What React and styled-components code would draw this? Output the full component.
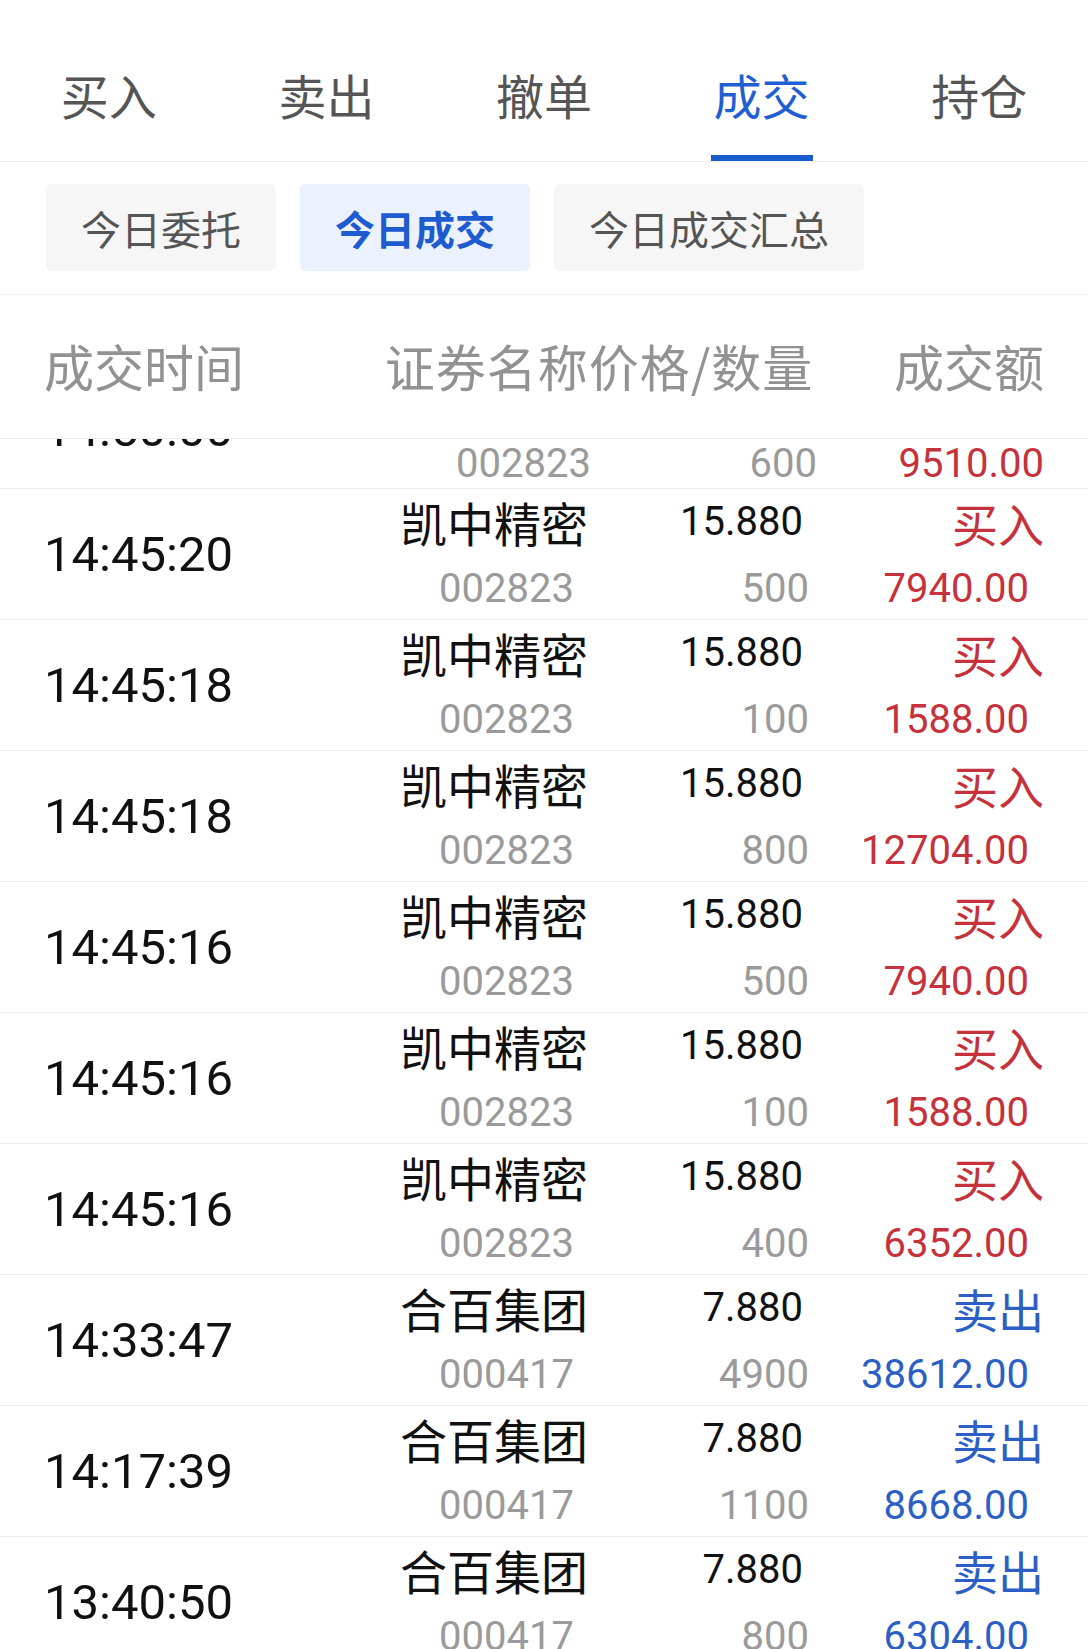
import React from 'react';
import styled, { createGlobalStyle, css } from 'styled-components';

const GlobalStyle = createGlobalStyle`
  html, body {
    margin: 0;
    padding: 0;
    background: #ffffff;
  }
  body {
    font-family: Roboto, 'Noto Sans CJK SC', sans-serif;
    color: #111111;
  }
`;

const Page = styled.div`
  width: 1088px;
  height: 1649px;
  overflow: hidden;
  background: #ffffff;
  display: flex;
  flex-direction: column;
`;

const TabBar = styled.div`
  display: flex;
  height: 161px;
  border-bottom: 1px solid #eeeeee;
  flex-shrink: 0;
`;

const Tab = styled.div`
  flex: 1;
  display: flex;
  flex-direction: column;
  align-items: center;
  padding-top: 66px;
  box-sizing: border-box;
  font-family: 'Noto Sans CJK SC', sans-serif;
  font-size: 48px;
  line-height: 56px;
  color: ${props => (props.active ? '#1f5fd2' : '#555555')};
`;

const TabIndicator = styled.div`
  margin-top: auto;
  width: 102px;
  height: 6px;
  background: #1a5cd0;
`;

const FilterBar = styled.div`
  display: flex;
  gap: 24px;
  padding: 22px 46px 23px;
  border-bottom: 1px solid #f0f0f0;
  flex-shrink: 0;
`;

const FilterButton = styled.div`
  height: 87px;
  padding: 0 35px;
  display: flex;
  align-items: center;
  border-radius: 5px;
  font-family: 'Noto Sans CJK SC', sans-serif;
  font-size: 40px;
  background: #f6f6f6;
  color: #555555;
  ${props => props.active && css`
    background: #ebf2fd;
    color: #1e5bd0;
    font-weight: bold;
  `}
`;

const Grid = css`
  display: grid;
  grid-template-columns: 380px 212px 226px 226px;
  padding-right: 44px;
`;

const HeaderRow = styled.div`
  ${Grid}
  height: 143px;
  align-items: center;
  border-bottom: 1px solid #eeeeee;
  font-family: 'Noto Sans CJK SC', sans-serif;
  font-size: 50px;
  color: #929292;
  flex-shrink: 0;
`;

const HeaderCell = styled.div`
  padding-left: ${props => props.left || 0}px;
  text-align: ${props => props.align || 'left'};
  grid-column: ${props => props.span || 'auto'};
  letter-spacing: ${props => props.spacing || 0}px;
  margin-top: -4px;
  white-space: nowrap;
`;

const List = styled.div`
  flex: 1;
  overflow: hidden;
`;

const ListInner = styled.div`
  margin-top: -81px;
`;

const Row = styled.div`
  ${Grid}
  height: 130px;
  border-bottom: 1px solid #ececec;
`;

const TimeCell = styled.div`
  display: flex;
  align-items: center;
  padding-left: 44px;
  padding-top: ${props => (props.shifted ? 12 : 0)}px;
  font-size: 49px;
  color: #111111;
`;

const Stack = styled.div`
  display: flex;
  flex-direction: column;
  align-items: flex-end;
`;

const TopLine = styled.div`
  height: 66px;
  line-height: 66px;
  padding-right: ${props => props.pad}px;
  white-space: nowrap;
`;

const BottomLine = styled.div`
  height: 64px;
  line-height: ${props => (props.shifted ? 80 : 68)}px;
  padding-right: ${props => props.pad}px;
  white-space: nowrap;
  font-size: 40px;
  color: ${props => props.color || '#9a9a9a'};
`;

const Name = styled(TopLine)`
  font-family: 'Noto Sans CJK SC', sans-serif;
  font-size: 47px;
  color: #111111;
`;

const Price = styled(TopLine)`
  font-size: 40px;
  color: #111111;
`;

const Side = styled(TopLine)`
  font-family: 'Noto Sans CJK SC', sans-serif;
  font-size: 46px;
  color: ${props => props.color};
`;

const RED = '#c5323b';
const BLUE = '#2c5fc6';

const trades = [
  { time: '14:50:00', name: '凯中精密', price: '15.850', code: '002823', qty: '600', amount: '9510.00', side: 'buy', shifted: true },
  { time: '14:45:20', name: '凯中精密', price: '15.880', code: '002823', qty: '500', amount: '7940.00', side: 'buy' },
  { time: '14:45:18', name: '凯中精密', price: '15.880', code: '002823', qty: '100', amount: '1588.00', side: 'buy' },
  { time: '14:45:18', name: '凯中精密', price: '15.880', code: '002823', qty: '800', amount: '12704.00', side: 'buy' },
  { time: '14:45:16', name: '凯中精密', price: '15.880', code: '002823', qty: '500', amount: '7940.00', side: 'buy' },
  { time: '14:45:16', name: '凯中精密', price: '15.880', code: '002823', qty: '100', amount: '1588.00', side: 'buy' },
  { time: '14:45:16', name: '凯中精密', price: '15.880', code: '002823', qty: '400', amount: '6352.00', side: 'buy' },
  { time: '14:33:47', name: '合百集团', price: '7.880', code: '000417', qty: '4900', amount: '38612.00', side: 'sell' },
  { time: '14:17:39', name: '合百集团', price: '7.880', code: '000417', qty: '1100', amount: '8668.00', side: 'sell' },
  { time: '13:40:50', name: '合百集团', price: '7.880', code: '000417', qty: '800', amount: '6304.00', side: 'sell' },
];

const tabs = ['买入', '卖出', '撤单', '成交', '持仓'];
const filters = ['今日委托', '今日成交', '今日成交汇总'];

const TradeRow = ({ t }) => {
  const color = t.side === 'buy' ? RED : BLUE;
  return (
    <Row>
      <TimeCell shifted={t.shifted}>{t.time}</TimeCell>
      <Stack>
        <Name pad={4}>{t.name}</Name>
        <BottomLine shifted={t.shifted} pad={t.shifted ? 1 : 18}>{t.code}</BottomLine>
      </Stack>
      <Stack>
        <Price pad={15}>{t.price}</Price>
        <BottomLine shifted={t.shifted} pad={t.shifted ? 1 : 9}>{t.qty}</BottomLine>
      </Stack>
      <Stack>
        <Side pad={0} color={color}>{t.side === 'buy' ? '买入' : '卖出'}</Side>
        <BottomLine shifted={t.shifted} pad={t.shifted ? 0 : 15} color={color}>{t.amount}</BottomLine>
      </Stack>
    </Row>
  );
};

const App = () => {
  return (
    <Page>
      <GlobalStyle />
      <TabBar>
        {tabs.map(label => (
          <Tab key={label} active={label === '成交'}>
            <span>{label}</span>
            {label === '成交' && <TabIndicator />}
          </Tab>
        ))}
      </TabBar>
      <FilterBar>
        {filters.map(label => (
          <FilterButton key={label} active={label === '今日成交'}>{label}</FilterButton>
        ))}
      </FilterBar>
      <HeaderRow>
        <HeaderCell left={44}>成交时间</HeaderCell>
        <HeaderCell span="2 / 4" align="center" spacing={1}>证券名称价格/数量</HeaderCell>
        <HeaderCell align="right">成交额</HeaderCell>
      </HeaderRow>
      <List>
        <ListInner>
          {trades.map((t, i) => (
            <TradeRow key={i} t={t} />
          ))}
        </ListInner>
      </List>
    </Page>
  );
};

export default App;
